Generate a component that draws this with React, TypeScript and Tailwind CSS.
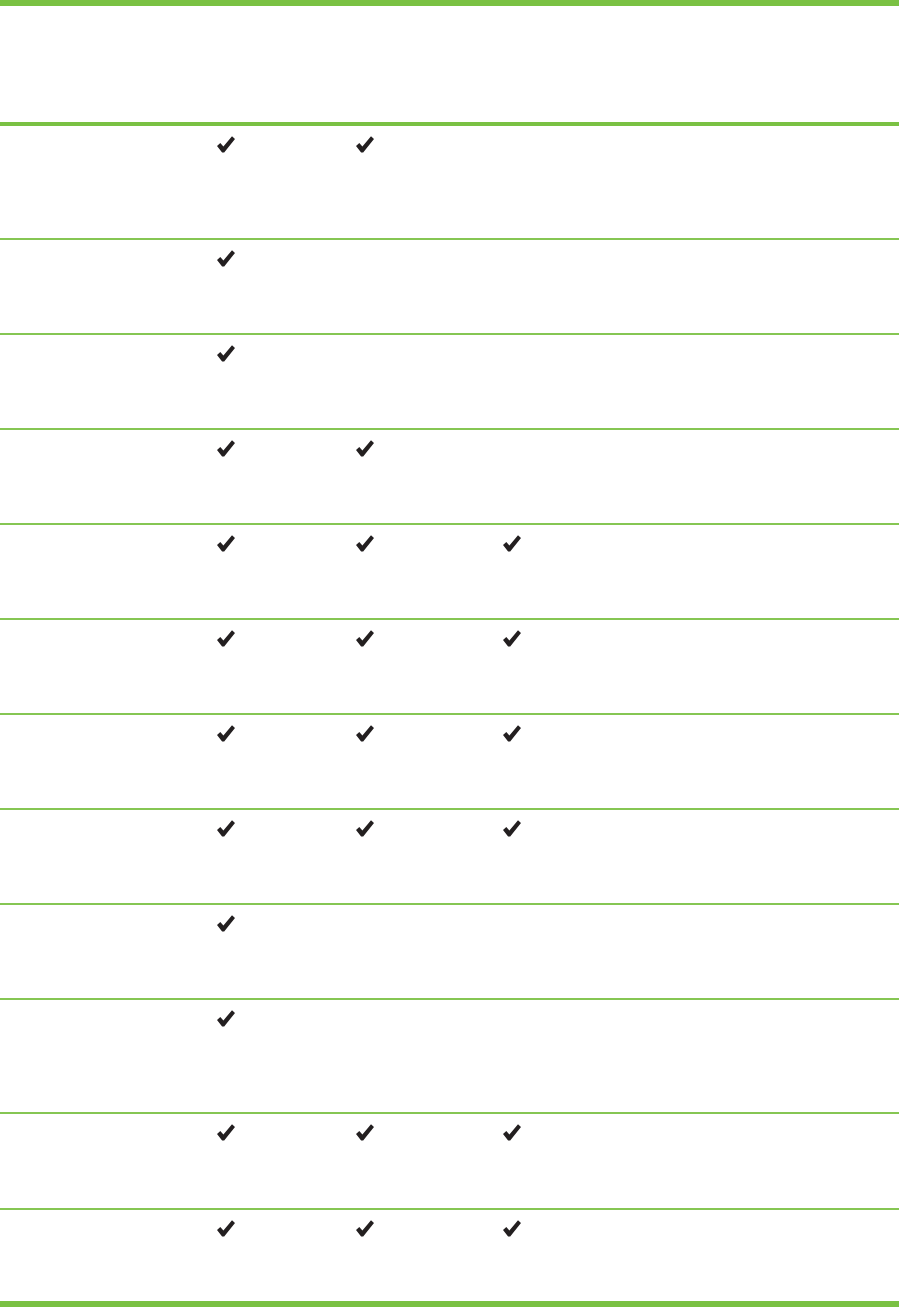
import React from "react";

const Check = () => (
  <svg width="18" height="17" viewBox="0 0 18 17" className="block">
    <path d="M0 9.9 L3.3 7.1 L6.4 10.4 L15 0.2 L18 2.9 L7.2 16.6 L5.1 16.6 Z" fill="#231f20" />
  </svg>
);

type Row = { h: string; marks: [boolean, boolean, boolean] };

const rows: Row[] = [
  { h: "h-[112px]", marks: [true, true, false] },
  { h: "h-[93px]", marks: [true, false, false] },
  { h: "h-[93px]", marks: [true, false, false] },
  { h: "h-[93px]", marks: [true, true, false] },
  { h: "h-[93px]", marks: [true, true, true] },
  { h: "h-[93px]", marks: [true, true, true] },
  { h: "h-[93px]", marks: [true, true, true] },
  { h: "h-[93px]", marks: [true, true, true] },
  { h: "h-[93px]", marks: [true, false, false] },
  { h: "h-[112px]", marks: [true, false, false] },
  { h: "h-[94px]", marks: [true, true, true] },
  { h: "h-[91px]", marks: [true, true, true] },
];

export default function App() {
  return (
    <div className="w-[899px] h-[1307px] bg-white flex flex-col font-['Liberation_Sans',sans-serif]">
      <div className="h-[6px] bg-[#7ac143]" />
      <div className="h-[116px]" />
      <div className="h-[4px] bg-[#7ac143]" />
      {rows.map((r, i) => (
        <div key={i} className="flex flex-col">
          <div className={`${r.h} grid grid-cols-[217px_139px_147px_1fr] pt-[10px]`}>
            <div />
            <div>{r.marks[0] && <Check />}</div>
            <div>{r.marks[1] && <Check />}</div>
            <div>{r.marks[2] && <Check />}</div>
          </div>
          {i < rows.length - 1 && <div className="h-[2px] bg-[#86c653]" />}
        </div>
      ))}
      <div className="h-[6px] bg-[#7ac143]" />
    </div>
  );
}
